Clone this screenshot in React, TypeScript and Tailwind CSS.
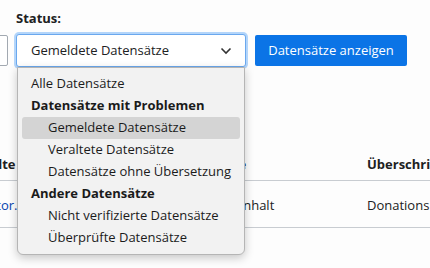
const font = { fontFamily: '"Open Sans", "Liberation Sans", sans-serif' };

type Option = { label: string; group?: boolean; indent?: boolean; active?: boolean };

const options: Option[] = [
  { label: 'Alle Datensätze' },
  { label: 'Datensätze mit Problemen', group: true },
  { label: 'Gemeldete Datensätze', indent: true, active: true },
  { label: 'Veraltete Datensätze', indent: true },
  { label: 'Datensätze ohne Übersetzung', indent: true },
  { label: 'Andere Datensätze', group: true },
  { label: 'Nicht verifizierte Datensätze', indent: true },
  { label: 'Überprüfte Datensätze', indent: true },
];

function Chevron() {
  return (
    <svg width="12" height="8" viewBox="0 0 12 8" className="text-[#333]">
      <polyline points="1.5,1.5 6,6 10.5,1.5" fill="none" stroke="currentColor" strokeWidth="1.6" />
    </svg>
  );
}

function StatusMenu() {
  return (
    <div className="absolute left-[1px] right-[1px] top-[33px] z-10 rounded-b-[6px] border border-[#b5b5b5] bg-[#f2f2f2] px-[4px] pb-[5px] pt-[5px] shadow-[0_3px_10px_rgba(0,0,0,0.22)]">
      {options.map((o) => (
        <div
          key={o.label}
          className={`flex h-[22px] items-center rounded-[3px] text-[13px] text-[#1b1b1b] ${o.indent ? 'pl-[26px]' : 'pl-[9px]'} ${o.group ? 'font-bold' : ''} ${o.active ? 'bg-[#d4d4d4]' : ''}`}
        >
          {o.label}
        </div>
      ))}
    </div>
  );
}

export default function App() {
  return (
    <div className="h-[268px] w-[430px] overflow-hidden bg-[#fdfdfd]" style={font}>
      <div className="pl-[16px] pt-[9px]">
        <div className="text-[13px] font-bold leading-[18px] text-[#202122]">Status:</div>
        <div className="mt-[7px] flex items-center">
          <div className="-ml-[40px] mr-[8px] h-[31px] w-[32px] rounded-r-[2px] border border-[#a2a9b1] bg-white" />
          <div className="relative w-[230px]">
            <div className="flex h-[33px] items-center justify-between rounded-[3px] border border-[#6aa8ee] bg-white pl-[14px] pr-[13px] text-[13px] text-[#202122] shadow-[0_0_0_2px_#b3d5fa]">
              <span>Gemeldete Datensätze</span>
              <Chevron />
            </div>
            <StatusMenu />
          </div>
          <button className="ml-[9px] h-[31px] w-[152px] rounded-[2px] bg-[#0b74e6] text-[13px] text-white">
            Datensätze anzeigen
          </button>
        </div>
      </div>
      <table className="ml-[-39px] mt-[79px] w-[540px] border-collapse text-left text-[13px] text-[#202122]">
        <thead>
          <tr className="border-b border-[#c8ccd1]">
            <th className="h-[34px] w-[245px] whitespace-nowrap pl-[8px] pt-[9px] align-top font-bold">Inhalte</th>
            <th className="w-[153px] whitespace-nowrap pl-[8px] pt-[9px] align-top font-bold">Seite</th>
            <th className="whitespace-nowrap pl-[8px] pt-[9px] align-top font-bold">Überschrift</th>
          </tr>
        </thead>
        <tbody>
          <tr className="border-b border-[#c8ccd1]">
            <td className="h-[47px] whitespace-nowrap pl-[8px] pt-[5px] text-[#0645ad]">mentor.de</td>
            <td className="whitespace-nowrap pl-[8px] pt-[5px]">Textinhalt</td>
            <td className="whitespace-nowrap pl-[8px] pt-[5px]">Donations</td>
          </tr>
        </tbody>
      </table>
    </div>
  );
}
